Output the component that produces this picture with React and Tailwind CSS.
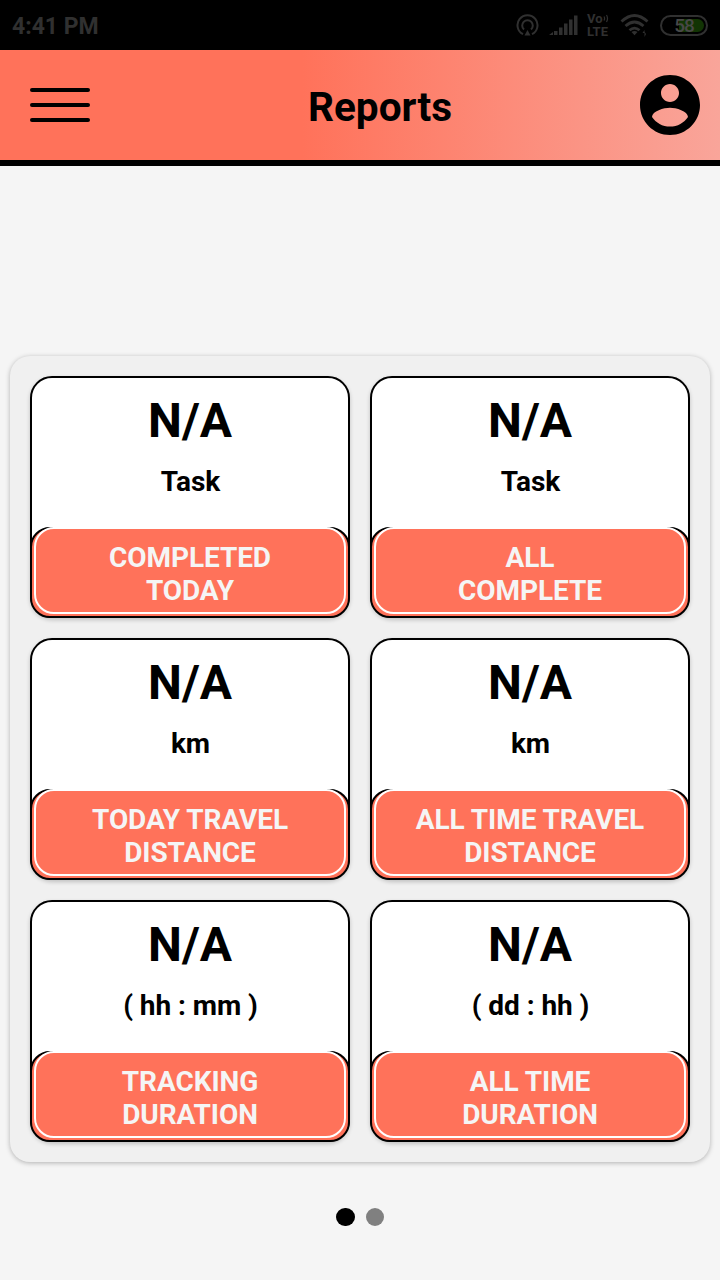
import React from 'react';

const CARDS = [
  { value: 'N/A', unit: 'Task', label: ['COMPLETED', 'TODAY'] },
  { value: 'N/A', unit: 'Task', label: ['ALL', 'COMPLETE'] },
  { value: 'N/A', unit: 'km', label: ['TODAY TRAVEL', 'DISTANCE'] },
  { value: 'N/A', unit: 'km', label: ['ALL TIME TRAVEL', 'DISTANCE'] },
  { value: 'N/A', unit: '( hh : mm )', label: ['TRACKING', 'DURATION'] },
  { value: 'N/A', unit: '( dd : hh )', label: ['ALL TIME', 'DURATION'] },
];

function StatusBar() {
  return (
    <div className="flex h-[50px] items-center justify-between bg-black pl-3 pr-[12px] text-[#303030]">
      <span className="mt-[3px] text-[23px] font-bold leading-none">4:41 PM</span>
      <div className="flex items-center">
        {/* Hotspot */}
        <svg className="mr-[10px]" width="23" height="24" viewBox="0 0 23 24" fill="none" stroke="currentColor" strokeWidth="2">
          <path d="M7 21.200A10 10 0 1 1 16 21.200" />
          <path d="M8 16.500A5.300 5.300 0 1 1 15 16.500" />
          <path d="M11.500 17l3 5.500h-6z" fill="currentColor" stroke="none" />
        </svg>
        {/* Signal */}
        <svg className="mr-[9px]" width="29" height="22" viewBox="0 0 29 22" fill="currentColor">
          <path d="M0 21l4-3v3zM5 17h3.500v4H5zM10 13.500h3.500V21H10zM15 9.500h3.500V21H15zM20 5.500h3.500V21H20zM25 1.500h3.500V21H25z" />
        </svg>
        <div className="mr-[10px] flex w-[23px] flex-col text-[13px] font-bold leading-[12px]">
          <span className="flex items-center">
            Vo
            <svg width="6" height="9" viewBox="0 0 6 9" fill="none" stroke="currentColor" strokeWidth="1.2">
              <path d="M1 2.500q1.200 2 0 4M3.500 1q2 3.500 0 7" />
            </svg>
          </span>
          <span className="leading-[13px]">LTE</span>
        </div>
        {/* Wifi */}
        <svg className="mr-[11px]" width="29" height="24" viewBox="0 0 29 24" fill="none" stroke="currentColor" strokeWidth="2.800">
          <path d="M1.500 8.500Q14.500 -3.500 27.500 8.500" />
          <path d="M5.500 13Q14.500 5 23.500 13" />
          <path d="M9.500 17.300Q14.500 13 19.500 17.300" />
          <path d="M14.500 22.300l-3-3.300q3-2.200 6 0z" fill="currentColor" stroke="none" />
          <path d="M24.500 17l-2 3h2zM24.500 19v5l1.500-3z" fill="currentColor" stroke="none" />
        </svg>
        <div className="relative flex h-[21px] w-[48px] items-center justify-center rounded-full border-2 border-[#303030] p-[2px]">
          <div className="h-full w-full rounded-full bg-[linear-gradient(90deg,#000_38%,#123404_38%)]" />
          <span className="absolute inset-0 text-center text-[19px] font-medium leading-[17px] tracking-[-1px] text-[#484848]">58</span>
        </div>
      </div>
    </div>
  );
}

function Header() {
  return (
    <header className="flex h-[116px] items-center justify-between border-b-6 border-black bg-[linear-gradient(90deg,#ff725a_0%,#ff725a_42%,#f9a59a_100%)] pl-[30px] pr-5">
      <button className="flex w-[60px] flex-col gap-[11px]">
        <span className="h-1 w-full rounded-full bg-black" />
        <span className="h-1 w-full rounded-full bg-black" />
        <span className="h-1 w-full rounded-full bg-black" />
      </button>
      <h1 className="ml-[30px] mt-[5px] text-[40.6px] font-bold leading-none">Reports</h1>
      <svg width="60" height="60" viewBox="2 2 20 20">
        <path
          fillRule="evenodd"
          d="M12 2C6.480 2 2 6.480 2 12s4.480 10 10 10 10-4.480 10-10S17.520 2 12 2zm0 3c1.660 0 3 1.340 3 3s-1.340 3-3 3-3-1.340-3-3 1.340-3 3-3zm0 14.200c-2.500 0-4.710-1.280-6-3.220.03-1.990 4-3.080 6-3.080 1.990 0 5.970 1.090 6 3.080-1.290 1.940-3.500 3.220-6 3.220z"
        />
      </svg>
    </header>
  );
}

function Card({ value, unit, label }) {
  return (
    <div className="flex h-[242px] flex-col rounded-[22px] border-2 border-black bg-white text-center shadow-[0_2px_4px_rgba(0,0,0,0.2)]">
      <p className="mt-[15px] text-[48px] font-bold leading-[56px]">{value}</p>
      <p className="mt-[16px] pl-px text-[28px] font-bold leading-[33px] tracking-[-0.05px]">{unit}</p>
      {/* Footer sits on top of the card border, its white outline hides the top edge */}
      <div className="-mx-[2px] -mb-[2px] mt-auto h-[91px] rounded-[20px] border-2 border-black bg-[#ff725a] px-[2px] pb-[2px]">
        <div className="-mt-[2px] h-[87px] rounded-[20px] border-2 border-white bg-[#ff725a] pt-[12px] text-[28px] font-bold leading-[33px] tracking-[-0.08px] text-[#f5f5f5]">
          {label.map((line) => (
            <p key={line}>{line}</p>
          ))}
        </div>
      </div>
    </div>
  );
}

function App() {
  return (
    <div className="flex h-[1280px] w-[720px] flex-col overflow-hidden bg-[#f5f5f5] font-['Roboto',sans-serif] text-black">
      <StatusBar />
      <Header />
      <main className="mx-[10px] mt-[190px] grid h-[806px] grid-cols-2 gap-5 rounded-[20px] bg-[#f0f0f0] p-5 shadow-[0_1px_5px_rgba(0,0,0,0.28)]">
        {CARDS.map((card, i) => (
          <Card key={i} {...card} />
        ))}
      </main>
      <div className="mt-[45.5px] flex justify-center gap-[11px]">
        <span className="size-[18.5px] rounded-full bg-black" />
        <span className="size-[18.5px] rounded-full bg-[#808080]" />
      </div>
    </div>
  );
}

export default App;
